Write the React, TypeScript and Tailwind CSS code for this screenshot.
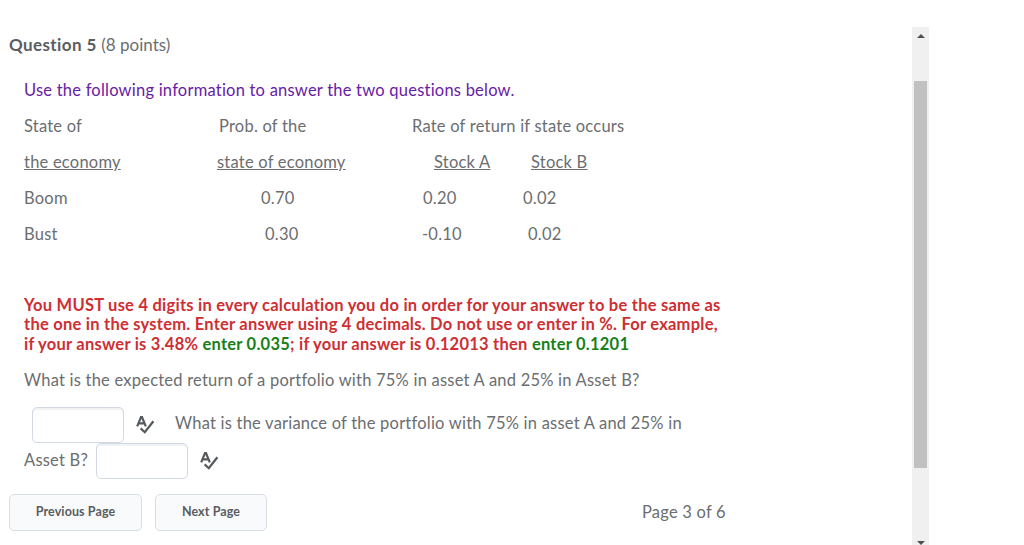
import { ReactNode } from "react";

const ROWS = [
  { state: "Boom", prob: "0.70", a: "0.20", b: "0.02", probPad: "pl-[44px]", aPad: "pl-[13px]", bPad: "pl-[16px]" },
  { state: "Bust", prob: "0.30", a: "-0.10", b: "0.02", probPad: "pl-[48px]", aPad: "pl-[12px]", bPad: "pl-[21px]" },
];

const ROW = "grid h-9 grid-cols-[193px_193px_97px_1fr] items-center whitespace-nowrap";

function SpellCheckIcon() {
  return (
    <svg className="h-[19px] w-[19px] shrink-0" viewBox="0 0 19 19" fill="none" stroke="#56595b" strokeWidth="2.2">
      <path d="M1.2 11.4 L5 2 H6 L9.8 11.4 M2.8 8.4 H8.4" />
      <path d="M4.6 13.4 L8.8 17.2 L17.4 6.2" />
    </svg>
  );
}

function AnswerInput() {
  return (
    <input
      type="text"
      className="h-9 w-[92px] shrink-0 rounded-[5px] border border-[#d3d9e3] bg-white px-3 shadow-[inset_0_2px_0_0_rgba(181,189,194,0.2)] outline-none"
    />
  );
}

function PageButton({ className, children }: { className: string; children: ReactNode }) {
  return (
    <button
      className={`h-[37px] rounded-[5px] border border-[#d8dee8] bg-[#f9fafc] text-[12.5px] font-bold tracking-[0.1px] text-[#5a5d5f] ${className}`}
    >
      {children}
    </button>
  );
}

export default function App() {
  return (
    <div className="flex h-[545px] w-full overflow-hidden bg-white font-['Lato',sans-serif] text-[16.5px] tracking-[0.22px] text-[#6b6e70]">
      <main className="w-[912px] shrink-0 pt-[27px]">
        <h2 className="flex h-9 items-center pl-[9px] text-[17px] tracking-[0.02px]">
          <span className="whitespace-pre">
            <strong className="tracking-[0.4px] text-[#5a5d5f]">Question 5</strong> (8 points)
          </span>
        </h2>

        <section className="mt-[9px] pl-6">
          <p className="flex h-9 items-center text-[#6820a6]">
            Use the following information to answer the two questions below.
          </p>

          <div className={ROW}>
            <span>State of</span>
            <span className="pl-[2px]">Prob. of the</span>
            <span className="pl-[2px]">Rate of return if state occurs</span>
          </div>
          <div className={`${ROW} underline`}>
            <span>the economy</span>
            <span>state of economy</span>
            <span className="pl-6">Stock A</span>
            <span className="pl-6">Stock B</span>
          </div>
          {ROWS.map((r) => (
            <div key={r.state} className={ROW}>
              <span>{r.state}</span>
              <span className={r.probPad}>{r.prob}</span>
              <span className={r.aPad}>{r.a}</span>
              <span className={r.bPad}>{r.b}</span>
            </div>
          ))}

          <p className="mt-[44px] leading-[19.4px] font-bold tracking-[0.24px] whitespace-nowrap text-[#cd2f33]">
            You MUST use 4 digits in every calculation you do in order for your answer to be the same as
            <br />
            the one in the system. Enter answer using 4 decimals. Do not use or enter in %. For example,
            <br />
            if your answer is 3.48% <span className="text-[#188018]">enter 0.035</span>; if your answer is 0.12013
            then <span className="text-[#188018]">enter 0.1201</span>
          </p>

          <p className="mt-[7.8px] flex h-9 items-center">
            What is the expected return of a portfolio with 75% in asset A and 25% in Asset B?
          </p>

          <div className="mt-[9px] flex items-center pl-2">
            <AnswerInput />
            <span className="ml-3 pb-0.5">
              <SpellCheckIcon />
            </span>
            <span className="ml-[20px] pb-1 whitespace-nowrap">
              What is the variance of the portfolio with 75% in asset A and 25% in
            </span>
          </div>
          <div className="flex items-center">
            <span className="w-[72px] shrink-0 pb-0.5 whitespace-nowrap">Asset B?</span>
            <AnswerInput />
            <span className="ml-3 pb-0.5">
              <SpellCheckIcon />
            </span>
          </div>
        </section>

        <footer className="mt-[15px] flex items-center pl-[9px]">
          <PageButton className="w-[133px]">Previous Page</PageButton>
          <PageButton className="ml-[13px] w-[112px]">Next Page</PageButton>
          <span className="ml-[375px]">Page 3 of 6</span>
        </footer>
      </main>

      {/* Scrollbar */}
      <aside className="mt-[27px] flex w-[17px] shrink-0 flex-col items-center bg-[#f0f0f0]">
        <svg className="mt-[7px] h-[4px] w-[8px]" viewBox="0 0 8 4" fill="#505050">
          <path d="M4 0 L8 4 H0 Z" />
        </svg>
        <div className="mt-[43px] h-[387px] w-[13px] bg-[#c1c1c1]" />
        <svg className="mt-auto h-[4px] w-[8px]" viewBox="0 0 8 4" fill="#505050">
          <path d="M0 0 H8 L4 4 Z" />
        </svg>
      </aside>
    </div>
  );
}
